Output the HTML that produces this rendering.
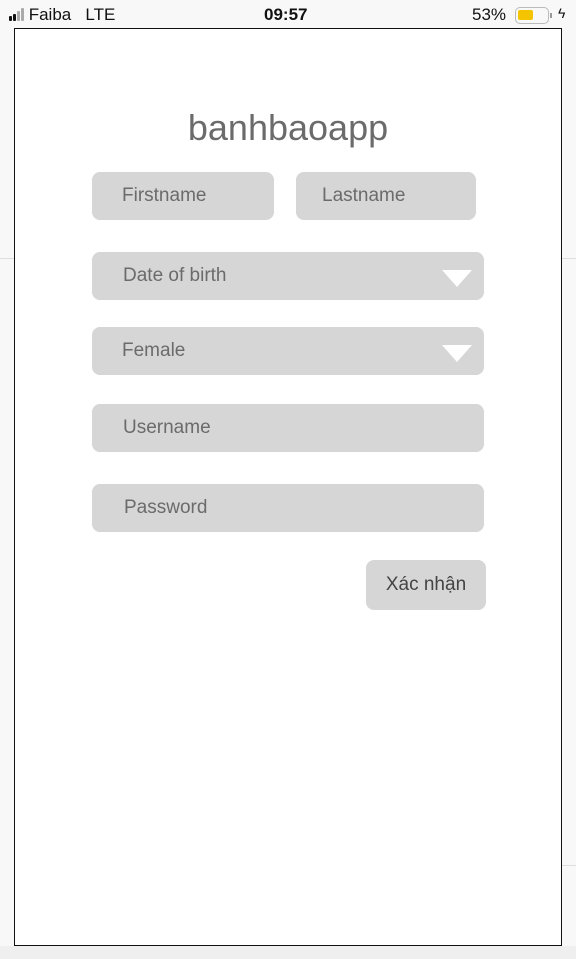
<!DOCTYPE html>
<html><head><meta charset="utf-8"><style>
*{margin:0;padding:0;box-sizing:border-box}
body{width:576px;height:959px;background:#f8f8f8;font-family:"Liberation Sans",sans-serif;position:relative;overflow:hidden}
.a{position:absolute}
.f{position:absolute;background:#d6d6d6;border-radius:8px;color:#6b6b6b;font-size:19px;line-height:48px;height:48px}
.tri{position:absolute;right:12px;top:18px;width:0;height:0;border-left:15px solid transparent;border-right:15px solid transparent;border-top:17px solid #fff}
</style></head><body>
<div class="a" style="left:0;top:258px;width:14px;height:1px;background:#ddd"></div>
<div class="a" style="left:562px;top:258px;width:14px;height:1px;background:#ddd"></div>
<div class="a" style="left:562px;top:865px;width:14px;height:1px;background:#ddd"></div>
<div class="a" style="left:0;top:946px;width:576px;height:13px;background:#efefef"></div>
<div class="a" style="left:9px;top:6px;height:18px;font-size:17px;color:#111;line-height:18px">
<span style="display:inline-block;width:3px;height:5px;background:#111;border-radius:1px;vertical-align:-1px"></span><span style="display:inline-block;width:3px;height:7px;background:#111;border-radius:1px;margin-left:1px;vertical-align:-1px"></span><span style="display:inline-block;width:3px;height:10px;background:#aaa;border-radius:1px;margin-left:1px;vertical-align:-1px"></span><span style="display:inline-block;width:3px;height:13px;background:#aaa;border-radius:1px;margin-left:1px;vertical-align:-1px"></span> Faiba&nbsp;&nbsp; LTE</div>
<div class="a" style="left:264px;top:6px;font-size:17px;font-weight:bold;color:#111;line-height:18px">09:57</div>
<div class="a" style="left:472px;top:6px;font-size:17px;color:#111;line-height:18px">53%</div>
<div class="a" style="left:515px;top:7px;width:34px;height:17px;border:1.5px solid #bbb;border-radius:5px;padding:2px"><div style="width:15px;height:10px;background:#f5c400;border-radius:2px"></div></div>
<div class="a" style="left:550px;top:13px;width:2px;height:5px;background:#999"></div>
<div class="a" style="left:558px;top:5px;font-size:14px;color:#111">ϟ</div>
<div class="a" style="left:14px;top:28px;width:548px;height:918px;background:#fff;border:1.5px solid #111"></div>
<div class="a" style="left:0;top:107px;width:576px;text-align:center;font-size:36px;color:#6b6b6b">banhbaoapp</div>
<div class="f" style="left:92px;top:172px;width:182px;padding-left:30px">Firstname</div>
<div class="f" style="left:296px;top:172px;width:180px;padding-left:26px">Lastname</div>
<div class="f" style="left:92px;top:252px;width:392px;padding-left:31px">Date of birth<div class="tri"></div></div>
<div class="f" style="left:92px;top:327px;width:392px;padding-left:30px">Female<div class="tri"></div></div>
<div class="f" style="left:92px;top:404px;width:392px;padding-left:31px">Username</div>
<div class="f" style="left:92px;top:484px;width:392px;padding-left:32px">Password</div>
<div class="f" style="left:366px;top:560px;width:120px;height:50px;line-height:50px;text-align:center;color:#444">Xác nhận</div>
</body></html>
